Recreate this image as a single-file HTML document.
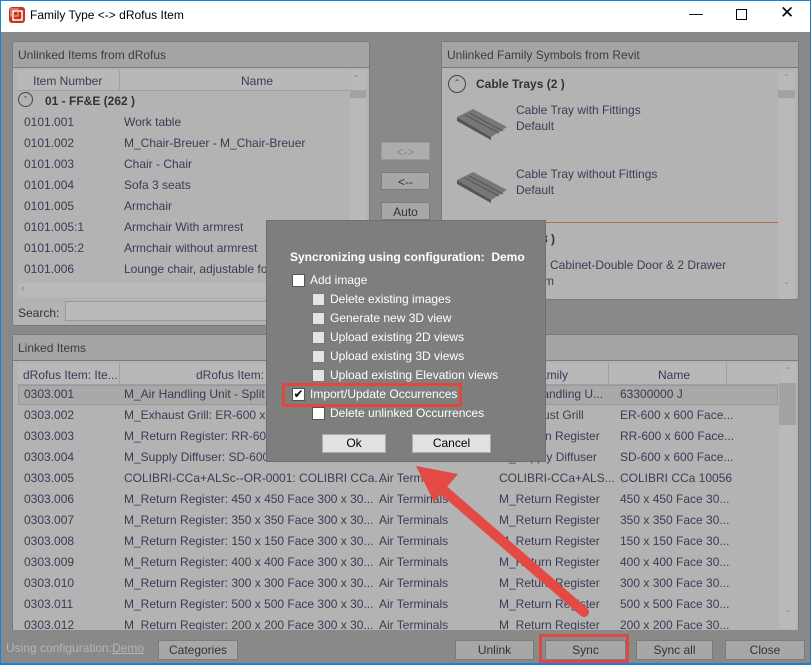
<!DOCTYPE html>
<html><head><meta charset="utf-8"><style>
*{box-sizing:border-box;margin:0;padding:0}
body{width:811px;height:665px;overflow:hidden;font-family:"Liberation Sans",sans-serif;font-size:12px;background:#898989;position:relative;color:#3b3b55}
.a{position:absolute;white-space:nowrap}
.title{left:0;top:0;width:811px;height:32px;background:#fff;border:1px solid #1883d7;border-bottom:none}
.panel{position:absolute;background:#b3b3b3;border:1px solid #7a7a7a;border-radius:3px}
.ph{position:absolute;left:0;top:0;right:0;height:26px;background:#a4a4a4;border-bottom:1px solid #7a7a7a;padding:6px 5px;color:#3c3c3c}
.btn{position:absolute;background:#a7a7a7;border:1px solid #7c7c7c;text-align:center;color:#333;line-height:18px}
.row{position:absolute;height:21px;line-height:21px}
.sb{position:absolute;background:#b9b9b9}
.dlg{position:absolute;left:266px;top:220px;width:280px;height:242px;background:#7e7e7e;border:1px solid #707070;color:#fff}
.cb{position:absolute;width:13px;height:13px;background:#fff;border:1px solid #555}
.cb.g{background:#e4e4e4;border-color:#777}
.dl{position:absolute;white-space:nowrap;color:#fff;font-size:12px}
.dbtn{position:absolute;background:#e1e1e1;border:1px solid #adadad;color:#000;text-align:center;line-height:17px}
</style></head><body>
<div class="a title"></div>
<div class="a" style="left:0;top:32px;width:1px;height:633px;background:#1883d7"></div>
<div class="a" style="right:0;top:32px;width:1px;height:633px;background:#1883d7"></div>
<div class="a" style="left:0;bottom:0;width:811px;height:2px;background:#1883d7"></div>
<svg class="a" style="left:8px;top:6px" width="18" height="18"><rect x="1" y="1" width="16" height="16" rx="3" fill="#c8321e"/><rect x="5" y="5" width="9" height="9" fill="none" stroke="#fff" stroke-width="1.5"/><rect x="3" y="3" width="7" height="7" fill="none" stroke="#f5b0a0" stroke-width="1"/></svg>
<div class="a" style="left:30px;top:8px;font-size:12px;color:#000">Family Type &lt;-&gt; dRofus Item</div>
<div class="a" style="left:689px;top:5px;font-size:14px;color:#000">&#8212;</div>
<div class="a" style="left:736px;top:9px;width:11px;height:11px;border:1px solid #000"></div>
<div class="a" style="left:780px;top:3px;font-size:17px;color:#000">&#10005;</div>

<div class="panel" style="left:12px;top:41px;width:358px;height:285px">
<div class="ph">Unlinked Items from dRofus</div>
<div class="a" style="left:5px;top:28px;width:331px;height:21px;background:#b8b8b8;border-bottom:1px solid #a0a0a0"></div>
<div class="a" style="left:106px;top:28px;width:1px;height:21px;background:#a0a0a0"></div>
<div class="a" style="left:20px;top:32px">Item Number</div>
<div class="a" style="left:228px;top:32px">Name</div>
<div class="sb" style="left:337px;top:28px;width:16px;height:225px"></div>
<div class="a" style="left:341px;top:31px;color:#888">&#710;</div>
<div class="a" style="left:337px;top:48px;width:16px;height:8px;background:#a3a3a3"></div>
<div class="a" style="left:5px;top:50px;width:15px;height:15px;border:1px solid #444;border-radius:50%;font-size:9px;text-align:center;line-height:14px;color:#333">&#710;</div>
<div class="a" style="left:32px;top:52px;font-weight:bold;color:#333">01 - FF&amp;E (262 )</div>
<div class="sb" style="left:5px;top:241px;width:331px;height:14px"></div>
<div class="a" style="left:8px;top:241px;color:#888;font-size:11px">&lsaquo;</div>
<div class="a" style="left:5px;top:264px;color:#333">Search:</div>
<div class="a" style="left:52px;top:259px;width:300px;height:20px;background:#b9b9b9;border:1px solid #999"></div>
</div>
<div class="row a" style="left:24px;top:112px">0101.001</div><div class="row a" style="left:124px;top:112px">Work table</div>
<div class="row a" style="left:24px;top:133px">0101.002</div><div class="row a" style="left:124px;top:133px">M_Chair-Breuer - M_Chair-Breuer</div>
<div class="row a" style="left:24px;top:154px">0101.003</div><div class="row a" style="left:124px;top:154px">Chair - Chair</div>
<div class="row a" style="left:24px;top:175px">0101.004</div><div class="row a" style="left:124px;top:175px">Sofa 3 seats</div>
<div class="row a" style="left:24px;top:196px">0101.005</div><div class="row a" style="left:124px;top:196px">Armchair</div>
<div class="row a" style="left:24px;top:217px">0101.005:1</div><div class="row a" style="left:124px;top:217px">Armchair With armrest</div>
<div class="row a" style="left:24px;top:238px">0101.005:2</div><div class="row a" style="left:124px;top:238px">Armchair without armrest</div>
<div class="row a" style="left:24px;top:259px">0101.006</div><div class="row a" style="left:124px;top:259px">Lounge chair, adjustable fo</div>

<div class="btn" style="left:381px;top:142px;width:49px;height:18px;color:#888;background:#adadad;border-color:#999">&lt;-&gt;</div>
<div class="btn" style="left:381px;top:172px;width:49px;height:18px">&lt;--</div>
<div class="btn" style="left:381px;top:202px;width:49px;height:18px">Auto</div>

<div class="panel" style="left:441px;top:41px;width:358px;height:259px">
<div class="ph">Unlinked Family Symbols from Revit</div>
<div class="sb" style="left:336px;top:30px;width:17px;height:227px"></div>
<div class="a" style="left:336px;top:48px;width:17px;height:8px;background:#a3a3a3"></div>
<div class="a" style="left:336px;top:30px;width:17px;text-align:center;color:#888">&#710;</div>
<div class="a" style="left:336px;top:240px;width:17px;text-align:center;color:#888;font-size:10px">&#711;</div>
<div class="a" style="left:6px;top:33px;width:18px;height:18px;border:1px solid #444;border-radius:50%;font-size:10px;text-align:center;line-height:18px;color:#333">&#710;</div>
<div class="a" style="left:34px;top:35px;font-weight:bold;color:#333">Cable Trays (2 )</div>
<div class="a" style="left:74px;top:61px">Cable Tray with Fittings</div>
<div class="a" style="left:74px;top:77px">Default</div>
<div class="a" style="left:74px;top:125px">Cable Tray without Fittings</div>
<div class="a" style="left:74px;top:141px">Default</div>
<div class="a" style="left:6px;top:180px;width:330px;height:1px;background:#b07050"></div>
<div class="a" style="left:6px;top:188px;width:18px;height:18px;border:1px solid #444;border-radius:50%"></div>
<div class="a" style="left:99px;top:190px;font-weight:bold;color:#333">8 )</div>
<div class="a" style="left:92px;top:216px">se Cabinet-Double Door &amp; 2 Drawer</div>
<div class="a" style="left:92px;top:232px">mm</div>
</div>
<svg class="a" style="left:455px;top:105px" width="55" height="35"><polygon points="2,12 18,4 52,22 36,32" fill="#777"/><polygon points="2,12 36,32 36,35 2,16" fill="#555"/><line x1="10" y1="10" x2="44" y2="28" stroke="#555"/><line x1="14" y1="8" x2="48" y2="26" stroke="#555"/></svg>
<svg class="a" style="left:455px;top:168px" width="55" height="35"><polygon points="2,12 18,4 52,22 36,32" fill="#777"/><polygon points="2,12 36,32 36,35 2,16" fill="#555"/><line x1="10" y1="10" x2="44" y2="28" stroke="#555"/><line x1="14" y1="8" x2="48" y2="26" stroke="#555"/></svg>

<div class="panel" style="left:12px;top:334px;width:787px;height:296px;border-bottom:none;border-radius:3px 3px 0 0">
<div class="ph">Linked Items</div>
<div class="a" style="left:5px;top:28px;width:760px;height:22px;background:#b8b8b8;border-bottom:1px solid #a0a0a0"></div>
<div class="a" style="left:106px;top:28px;width:1px;height:22px;background:#a0a0a0"></div>
<div class="a" style="left:595px;top:28px;width:1px;height:22px;background:#a0a0a0"></div>
<div class="a" style="left:713px;top:28px;width:1px;height:22px;background:#a0a0a0"></div>
<div class="a" style="left:10px;top:33px">dRofus Item: Ite...</div>
<div class="a" style="left:183px;top:33px">dRofus Item:</div>
<div class="a" style="left:527px;top:33px">amily</div>
<div class="a" style="left:645px;top:33px">Name</div>
<div class="sb" style="left:766px;top:28px;width:17px;height:266px"></div>
<div class="a" style="left:766px;top:48px;width:17px;height:42px;background:#a3a3a3"></div>
<div class="a" style="left:766px;top:30px;width:17px;text-align:center;color:#888">&#710;</div>
<div class="a" style="left:766px;top:275px;width:17px;text-align:center;color:#888;font-size:10px">&#711;</div>
<div class="a" style="left:5px;top:50px;width:760px;height:20px;background:#a9a9a9;border:1px solid #999"></div>
</div>
<div style="position:absolute;left:0;top:384px;width:811px;height:246px;overflow:hidden">
<div class="row a" style="left:24px;top:0">0303.001</div><div class="row a" style="left:124px;top:0">M_Air Handling Unit - Split</div><div class="row a" style="left:499px;top:0">M_Air Handling U...</div><div class="row a" style="left:620px;top:0">63300000 J</div>
<div class="row a" style="left:24px;top:21px">0303.002</div><div class="row a" style="left:124px;top:21px">M_Exhaust Grill: ER-600 x 6</div><div class="row a" style="left:499px;top:21px">M_Exhaust Grill</div><div class="row a" style="left:620px;top:21px">ER-600 x 600 Face...</div>
<div class="row a" style="left:24px;top:42px">0303.003</div><div class="row a" style="left:124px;top:42px">M_Return Register: RR-600</div><div class="row a" style="left:499px;top:42px">M_Return Register</div><div class="row a" style="left:620px;top:42px">RR-600 x 600 Face...</div>
<div class="row a" style="left:24px;top:63px">0303.004</div><div class="row a" style="left:124px;top:63px">M_Supply Diffuser: SD-600</div><div class="row a" style="left:499px;top:63px">M_Supply Diffuser</div><div class="row a" style="left:620px;top:63px">SD-600 x 600 Face...</div>
<div class="row a" style="left:24px;top:84px">0303.005</div><div class="row a" style="left:124px;top:84px">COLIBRI-CCa+ALSc--OR-0001: COLIBRI CCa...</div><div class="row a" style="left:379px;top:84px">Air Terminals</div><div class="row a" style="left:499px;top:84px">COLIBRI-CCa+ALS...</div><div class="row a" style="left:620px;top:84px">COLIBRI CCa 10056</div>
<div class="row a" style="left:24px;top:105px">0303.006</div><div class="row a" style="left:124px;top:105px">M_Return Register: 450 x 450 Face 300 x 30...</div><div class="row a" style="left:379px;top:105px">Air Terminals</div><div class="row a" style="left:499px;top:105px">M_Return Register</div><div class="row a" style="left:620px;top:105px">450 x 450 Face 30...</div>
<div class="row a" style="left:24px;top:126px">0303.007</div><div class="row a" style="left:124px;top:126px">M_Return Register: 350 x 350 Face 300 x 30...</div><div class="row a" style="left:379px;top:126px">Air Terminals</div><div class="row a" style="left:499px;top:126px">M_Return Register</div><div class="row a" style="left:620px;top:126px">350 x 350 Face 30...</div>
<div class="row a" style="left:24px;top:147px">0303.008</div><div class="row a" style="left:124px;top:147px">M_Return Register: 150 x 150 Face 300 x 30...</div><div class="row a" style="left:379px;top:147px">Air Terminals</div><div class="row a" style="left:499px;top:147px">M_Return Register</div><div class="row a" style="left:620px;top:147px">150 x 150 Face 30...</div>
<div class="row a" style="left:24px;top:168px">0303.009</div><div class="row a" style="left:124px;top:168px">M_Return Register: 400 x 400 Face 300 x 30...</div><div class="row a" style="left:379px;top:168px">Air Terminals</div><div class="row a" style="left:499px;top:168px">M_Return Register</div><div class="row a" style="left:620px;top:168px">400 x 400 Face 30...</div>
<div class="row a" style="left:24px;top:189px">0303.010</div><div class="row a" style="left:124px;top:189px">M_Return Register: 300 x 300 Face 300 x 30...</div><div class="row a" style="left:379px;top:189px">Air Terminals</div><div class="row a" style="left:499px;top:189px">M_Return Register</div><div class="row a" style="left:620px;top:189px">300 x 300 Face 30...</div>
<div class="row a" style="left:24px;top:210px">0303.011</div><div class="row a" style="left:124px;top:210px">M_Return Register: 500 x 500 Face 300 x 30...</div><div class="row a" style="left:379px;top:210px">Air Terminals</div><div class="row a" style="left:499px;top:210px">M_Return Register</div><div class="row a" style="left:620px;top:210px">500 x 500 Face 30...</div>
<div class="row a" style="left:24px;top:231px">0303.012</div><div class="row a" style="left:124px;top:231px">M_Return Register: 200 x 200 Face 300 x 30...</div><div class="row a" style="left:379px;top:231px">Air Terminals</div><div class="row a" style="left:499px;top:231px">M_Return Register</div><div class="row a" style="left:620px;top:231px">200 x 200 Face 30...</div>
</div>

<div class="a" style="left:6px;top:641px;color:#b5b5b5">Using configuration:<span style="text-decoration:underline">Demo</span></div>
<div class="btn" style="left:158px;top:640px;width:80px;height:20px">Categories</div>
<div class="btn" style="left:455px;top:640px;width:79px;height:20px">Unlink</div>
<div class="btn" style="left:545px;top:640px;width:81px;height:20px">Sync</div>
<div class="a" style="left:539px;top:634px;width:90px;height:29px;border:3px solid #e0483f"></div>
<div class="btn" style="left:636px;top:640px;width:77px;height:20px">Sync all</div>
<div class="btn" style="left:725px;top:640px;width:80px;height:20px">Close</div>

<div class="dlg">
<div class="dl" style="left:23px;top:29px;font-weight:bold">Syncronizing using configuration:&nbsp; Demo</div>
<div class="cb" style="left:25px;top:53px"></div><div class="dl" style="left:43px;top:52px">Add image</div>
<div class="cb g" style="left:45px;top:72px"></div><div class="dl" style="left:63px;top:71px">Delete existing images</div>
<div class="cb g" style="left:45px;top:91px"></div><div class="dl" style="left:63px;top:90px">Generate new 3D view</div>
<div class="cb g" style="left:45px;top:110px"></div><div class="dl" style="left:63px;top:109px">Upload existing 2D views</div>
<div class="cb g" style="left:45px;top:129px"></div><div class="dl" style="left:63px;top:128px">Upload existing 3D views</div>
<div class="cb g" style="left:45px;top:148px"></div><div class="dl" style="left:63px;top:147px">Upload existing Elevation views</div>
<div class="cb" style="left:25px;top:167px;font-size:12px;line-height:10px;color:#000;text-align:center">&#10004;</div><div class="dl" style="left:43px;top:166px">Import/Update Occurrences</div>
<div class="a" style="left:15px;top:162px;width:180px;height:24px;border:3px solid #e0483f"></div>
<div class="cb" style="left:45px;top:186px"></div><div class="dl" style="left:63px;top:185px">Delete unlinked Occurrences</div>
<div class="dbtn" style="left:55px;top:213px;width:64px;height:19px">Ok</div>
<div class="dbtn" style="left:145px;top:213px;width:79px;height:19px">Cancel</div>
</div>

<svg class="a" style="left:0;top:0" width="811" height="665"><line x1="584" y1="612" x2="440" y2="487" stroke="#e24a43" stroke-width="10" stroke-linecap="round"/><polygon points="416,466 458,474 434,502" fill="#e24a43"/></svg>
</body></html>
